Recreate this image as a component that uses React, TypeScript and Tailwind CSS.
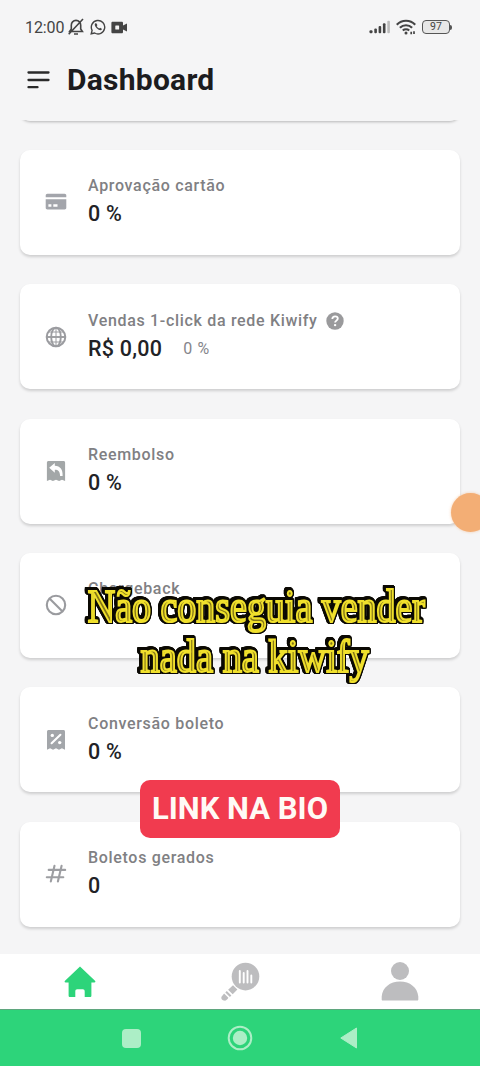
import type { ReactNode } from "react";

type Metric = {
  label: string;
  value: string;
  icon: ReactNode;
  help?: boolean;
  extra?: string;
};

function CardIcon() {
  return (
    <svg width="22" height="22" viewBox="0 0 22 22" fill="#a3a5ab">
      <path d="M.7 6.200V4.500c0-1 .7-1.700 1.700-1.700h17.200c1 0 1.700.7 1.700 1.700v1.700z" />
      <path
        fillRule="evenodd"
        d="M.7 8.300h20.600v8.400c0 1-.7 1.700-1.700 1.700H2.400c-1 0-1.700-.7-1.700-1.700zM3.400 13.200v2.500h3v-2.500zm4.900 0v2.500h4.200v-2.500z"
      />
    </svg>
  );
}

function GlobeIcon() {
  return (
    <svg width="22" height="22" viewBox="0 0 22 22" fill="none" stroke="#9b9ca0" strokeWidth="2">
      <circle cx="11" cy="11" r="9.300" />
      <ellipse cx="11" cy="11" rx="4.800" ry="9.300" strokeWidth="1.900" />
      <path d="M11 1.700v18.600" strokeWidth="1" />
      <path d="M2 11h18" strokeWidth="1.900" />
      <path d="M3.500 6h15M3.500 16h15" strokeWidth="1.200" />
    </svg>
  );
}

function RefundIcon() {
  return (
    <svg width="22" height="22" viewBox="0 0 22 22">
      <path
        d="M1.900 2.500c0-1 .7-1.600 1.600-1.600h15c1 0 1.600.7 1.600 1.600V21l-3.100-1.300-2.900 1.300-3.100-1.300L7.900 21 5 19.700 1.900 21z"
        fill="#a3a7a8"
      />
      <path d="M9.800 2.900 4.200 7.700l5.600 5.100V9.700c3.600 0 5.100 1.800 5.300 6.300h2.500c.4-6.500-2.300-10.100-7.800-10.300z" fill="#fff" />
    </svg>
  );
}

function BanIcon() {
  return (
    <svg width="22" height="22" viewBox="0 0 22 22" fill="none" stroke="#9a9b9f" strokeWidth="2.100">
      <circle cx="11" cy="11" r="9.200" />
      <path d="m4.500 4.500 13 13" />
    </svg>
  );
}

function ReceiptPercentIcon() {
  return (
    <svg width="22" height="22" viewBox="0 0 22 22">
      <path
        d="M2 2.700C2 1.700 2.700 1 3.600 1h14.800c1 0 1.600.7 1.600 1.700v18.100l-3.100-1.500-2.900 1.500-3-1.500-3 1.500-2.900-1.500L2 20.800z"
        fill="#a3a6aa"
      />
      <path d="m6.600 14.200 8.800-8.400" stroke="#fff" strokeWidth="2.100" strokeLinecap="round" />
      <circle cx="7.300" cy="6.400" r="1.700" fill="#fff" />
      <circle cx="14.700" cy="13.600" r="1.700" fill="#fff" />
    </svg>
  );
}

function HashIcon() {
  return (
    <svg width="22" height="22" viewBox="0 0 22 22" fill="none" stroke="#9d9ea2" strokeWidth="2.100" strokeLinecap="round">
      <path d="M3.700 6.900h16.500M1.800 14.300h16.500M9.500 2.700 5.800 18.500M16.600 2.700 12.900 18.500" />
    </svg>
  );
}

function HelpIcon() {
  return (
    <svg width="18" height="18" viewBox="0 0 18 18">
      <circle cx="9" cy="9" r="8.700" fill="#9a9a9c" />
      <path
        d="M6.300 7C6.400 5.200 7.500 4.300 9.100 4.300c1.600 0 2.700 1 2.700 2.300 0 2-2.700 2-2.700 3.900"
        fill="none"
        stroke="#fff"
        strokeWidth="1.800"
      />
      <circle cx="9.100" cy="13.100" r="1.200" fill="#fff" />
    </svg>
  );
}

const metrics: Metric[] = [
  { label: "Aprovação cartão", value: "0 %", icon: <CardIcon /> },
  { label: "Vendas 1-click da rede Kiwify", value: "R$ 0,00", icon: <GlobeIcon />, help: true, extra: "0 %" },
  { label: "Reembolso", value: "0 %", icon: <RefundIcon /> },
  { label: "Chargeback", value: "", icon: <BanIcon /> },
  { label: "Conversão boleto", value: "0 %", icon: <ReceiptPercentIcon /> },
  { label: "Boletos gerados", value: "0", icon: <HashIcon /> },
];

function StatusBar() {
  return (
    <div className="flex h-[54px] items-center justify-between pl-[25px] pr-[28px] text-[#444]">
      <div className="flex items-center">
        <span className="w-[39px] whitespace-nowrap pt-[2px] text-[16px] leading-none tracking-[-0.1px]">12:00</span>
        <svg className="ml-[4px]" width="16" height="18" viewBox="0 0 16 18" fill="none" stroke="currentColor" strokeWidth="1.600">
          <path d="M1.600 13.500h12.800l-1.700-2.600V7.300c0-2.700-1.800-4.900-4.700-4.900S3.300 4.600 3.300 7.300v3.600zM6 16h4M.7 16.300 15 1" />
        </svg>
        <svg className="ml-[6px]" width="16" height="16" viewBox="0 0 16 16" fill="none" stroke="currentColor" strokeWidth="1.400">
          <path d="m1.200 14.800.9-3.500A6.700 6.700 0 1 1 4.700 14z" />
          <path
            d="M5.200 4.300c-1 1-.5 2.900 1.500 4.900s4 2.500 5 1.500l.1-1-1.700-.9-.9.8c-.9-.3-2.200-1.600-2.500-2.500l.7-.9-.8-1.800z"
            fill="currentColor"
            stroke="none"
          />
        </svg>
        <svg className="ml-[5px]" width="17" height="13" viewBox="0 0 17 13">
          <path
            d="M1.800.7h8.800c.9 0 1.400.5 1.400 1.400v2.500l4-2v7.800l-4-2v2.500c0 .9-.5 1.400-1.400 1.400H1.800c-.9 0-1.400-.5-1.400-1.400V2.100C.4 1.200.9.7 1.800.7z"
            fill="currentColor"
          />
          <rect x="4.300" y="4.600" width="3.800" height="3.800" rx=".5" fill="#f5f5f5" />
        </svg>
      </div>
      <div className="flex items-center">
        <svg width="22" height="14" viewBox="0 0 22 14" fill="currentColor">
          <rect x=".5" y="10.300" width="3" height="3" rx="1" />
          <rect x="5.300" y="8.500" width="2.600" height="4.800" rx="1" />
          <rect x="9.600" y="6" width="2.600" height="7.300" rx="1" />
          <rect x="13.900" y="3.300" width="2.600" height="10" rx="1" />
          <rect x="18.300" y=".7" width="2.600" height="12.600" rx="1" fill="#bbb" />
        </svg>
        <svg className="ml-[5px]" width="20" height="16" viewBox="0 0 20 16" fill="none" stroke="currentColor" strokeWidth="2.200">
          <path d="M.8 5.700c5-5.300 13.400-5.300 18.400 0M3.900 8.700c3.400-3.300 8.800-3.300 12.200 0M6.800 11.500c1.700-1.500 4.700-1.500 6.400 0" />
          <circle cx="10" cy="14" r="1.500" fill="currentColor" stroke="none" />
          <path d="M15.200 15.300v-2.600M18 12.300v2.800" strokeWidth="1.700" />
        </svg>
        <div className="ml-[6px] flex h-[14px] w-[28px] items-center justify-center rounded-[4px] border-[1.500px] border-[#555] bg-[#e7e7e7] text-[10.500px] leading-none">
          97
        </div>
        <span className="h-[5px] w-[2px] rounded-r bg-[#555]" />
      </div>
    </div>
  );
}

function MetricCard({ label, value, icon, help, extra }: Metric) {
  return (
    <div className="flex h-[105px] shrink-0 items-center rounded-[10px] bg-white pl-[25px] shadow-[0_2px_3px_rgba(0,0,0,0.16)]">
      {icon}
      <div className="ml-[21px] h-[54px]">
        <div className="flex h-[22px] items-center gap-[8px]">
          <span className="whitespace-nowrap text-[16px] font-medium tracking-[0.680px] text-[#808083]">{label}</span>
          {help && <HelpIcon />}
        </div>
        <div className="mt-[3px] flex h-[28px] items-center gap-[21px]">
          <span className="whitespace-nowrap text-[21.500px] font-medium tracking-[0.250px] text-[#222226]">{value}</span>
          {extra && <span className="text-[16px] tracking-[0.600px] text-[#85858b]">{extra}</span>}
        </div>
      </div>
    </div>
  );
}

function TabBar() {
  return (
    <nav className="grid h-[55px] shrink-0 grid-cols-3 items-center justify-items-center bg-white">
      <svg width="32" height="32" viewBox="0 0 32 32" fill="#2dd47a">
        <path d="M16 .5 1 14.800c-.8.9-.4 1.700.6 1.700h3v13c0 1 .5 1.500 1.500 1.500h5.200v-5.500c0-1.400.7-2.200 1.900-2.200h5.600c1.200 0 1.900.8 1.900 2.200V31h5.200c1 0 1.500-.5 1.500-1.500v-13h3c1 0 1.400-.8.600-1.700z" />
      </svg>
      <svg width="40" height="40" viewBox="0 0 40 40" fill="#bdbdbf">
        <circle cx="25.500" cy="14.600" r="13.800" />
        <path d="M19.800 9v11.500M23.700 11v9.500M27.500 9v11.500M31.300 13.500v7" stroke="#fff" strokeWidth="1.900" strokeLinecap="round" />
        <path d="m13 23.200 4.400 4.400-4.700 4.700-4.600-4.600zM6.800 28.900l4.600 4.600-1.500 1.500-4.600-4.600zM4.100 31.500l4.300 4.300c-1.200 2-2.600 3.200-4.400 2.800-2.900-.8-3.300-3.100-1.900-4.600z" />
      </svg>
      <svg className="-mt-[1px]" width="38" height="40" viewBox="0 0 38 40" fill="#bdbdbf">
        <circle cx="19" cy="10" r="9" />
        <path d="M.7 38.500v-3C1.500 26.500 9 20.500 19 20.500s17.500 6 18.300 15v3c0 .6-.4 1-1 1H1.700c-.6 0-1-.4-1-1z" />
      </svg>
    </nav>
  );
}

function SystemNav() {
  return (
    <div className="flex h-[57px] shrink-0 items-center border-t border-[#5fa67e] bg-[#2dd47a] pl-[122px]">
      <div className="h-[19px] w-[19px] rounded-[4px] bg-[#aceec6]" />
      <svg width="26" height="26" viewBox="0 0 26 26" className="ml-[86px]">
        <circle cx="13" cy="13" r="11.300" fill="none" stroke="#aceec6" strokeWidth="2" />
        <circle cx="13" cy="13" r="7.200" fill="#aceec6" />
      </svg>
      <svg width="18" height="22" viewBox="0 0 18 22" className="ml-[87px]">
        <path d="M16.500 1v20L.8 11z" fill="#aceec6" stroke="#aceec6" strokeLinejoin="round" />
      </svg>
    </div>
  );
}

export default function App() {
  return (
    <div className="relative flex h-[1066px] w-[480px] flex-col overflow-hidden bg-[#f5f5f6] font-['Roboto',sans-serif]">
      <header className="h-[120px] shrink-0">
        <StatusBar />
        <div className="flex h-[50px] items-center pl-[27px]">
          <svg width="23" height="20" viewBox="0 0 23 20" className="mt-[2px]" stroke="#2a2a2a" strokeWidth="2.300" strokeLinecap="round">
            <path d="M1.500 2.500h20M1.500 10h20M1.500 17.200h9" />
          </svg>
          <h1 className="ml-[17px] text-[30px] font-bold tracking-[0.250px] text-[#1c1c1e]">Dashboard</h1>
        </div>
      </header>

      <main className="min-h-0 flex-1 overflow-hidden">
        <div className="-mt-[104.500px] flex flex-col gap-[29.350px] px-[20px]">
          <div className="h-[105px] shrink-0 rounded-[10px] bg-[#f5f5f6] shadow-[0_1px_3px_rgba(0,0,0,0.26)]" />
          {metrics.map((metric) => (
            <MetricCard key={metric.label} {...metric} />
          ))}
        </div>
      </main>

      <TabBar />
      <SystemNav />

      {/* floating bubble */}
      <div className="absolute left-[451px] top-[493px] h-[39px] w-[39px] rounded-full bg-[#f3ae75] shadow-[0_0_3px_rgba(243,174,117,0.6)]" />

      {/* captions: yellow contour over a dark fill, with a black rim around it */}
      <div className="absolute inset-x-0 top-[582px] flex flex-col items-center text-center font-['Liberation_Serif',serif] text-[46px] leading-[49.500px] text-[#857817] [-webkit-text-stroke:2.200px_#f0e02c] [filter:drop-shadow(1.300px_0_0_#0b0903)_drop-shadow(-1.300px_0_0_#0b0903)_drop-shadow(0_1.300px_0_#0b0903)_drop-shadow(0_-1.300px_0_#0b0903)_drop-shadow(0.5px_0.5px_0_#0b0903)_drop-shadow(-0.5px_-0.5px_0_#0b0903)]">
        <span className="ml-[32px] origin-center scale-x-[0.825] whitespace-nowrap">Não conseguia vender</span>
        <span className="ml-[30px] origin-center scale-x-[0.835] whitespace-nowrap">nada na kiwify</span>
      </div>

      <div className="absolute left-[140px] top-[780px] flex h-[58px] w-[200px] items-center justify-center whitespace-nowrap rounded-[10px] bg-[#f13b4f] text-[31px] font-bold text-[#fffaf5]">
        LINK NA BIO
      </div>
    </div>
  );
}
